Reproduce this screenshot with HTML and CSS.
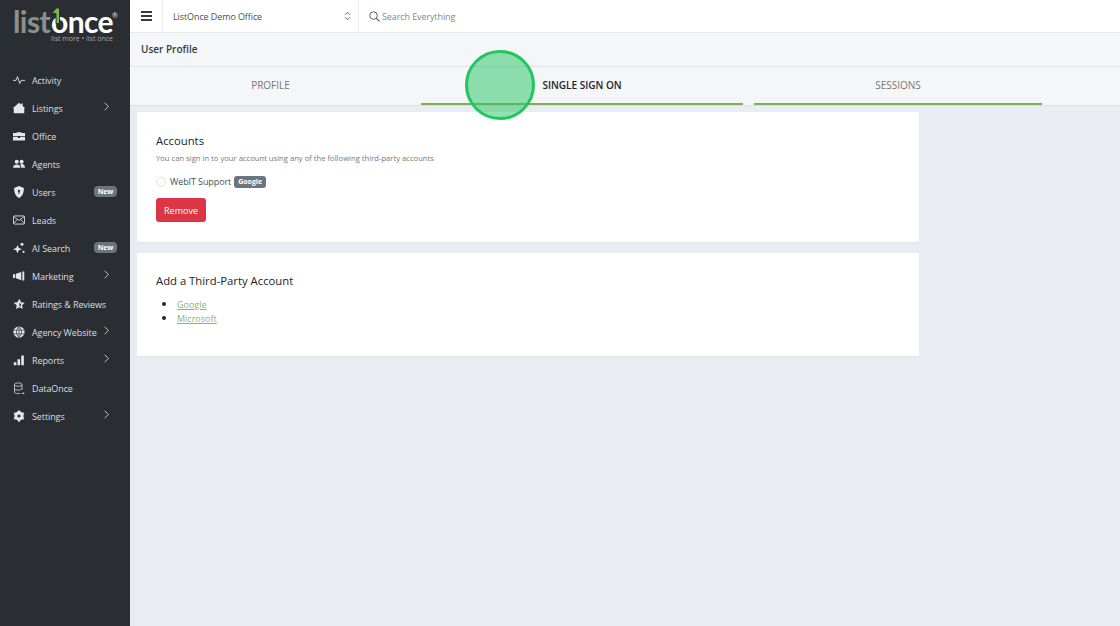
FILE: index.html
```html
<!DOCTYPE html>
<html lang="en">
<head>
    <meta charset="UTF-8">
    <title>User Profile</title>
    <link rel="stylesheet" href="styles.css">
</head>
<body>
    <aside class="sidebar">
        <div class="logo">
            <div class="logo-word"><span class="logo-list">list</span><span class="logo-once">once</span><span class="logo-reg">®</span>
                <svg class="logo-one" viewBox="0 0 10 17" width="10" height="17"><path d="M1 6.500 5 1h3.500v15.500H5V6.500z" fill="#7ab648" stroke="#2a2e32" stroke-width="1"/></svg>
            </div>
            <div class="logo-tag">list more • list once</div>
        </div>
        <nav class="nav">
            <a class="nav-item"><svg class="nav-icon" viewBox="0 0 16 16"><path d="M0 8.500h4l2-5 3 9 2-4h5" fill="none" stroke="#e4e6e8" stroke-width="1.200"/></svg><span>Activity</span></a>
            <a class="nav-item"><svg class="nav-icon" viewBox="0 0 16 16"><path d="M0 8 8 1l3 2.500V2h2v3.500L16 8l-1 1v6H1V9z" fill="#e4e6e8"/></svg><span>Listings</span><svg class="nav-arrow" viewBox="0 0 8 12"><path d="M1.500 1 6.500 6l-5 5" fill="none" stroke="#cfd2d5" stroke-width="1.200"/></svg></a>
            <a class="nav-item"><svg class="nav-icon" viewBox="0 0 16 16"><path d="M5 4V2.500h6V4h5v4H0V4zM6 3.500V4h4v-.5zM0 9h6.500v1.500h3V9H16v5H0z" fill="#e4e6e8"/></svg><span>Office</span></a>
            <a class="nav-item"><svg class="nav-icon" viewBox="0 0 16 16"><circle cx="5" cy="5" r="2.700" fill="#e4e6e8"/><circle cx="11.500" cy="5" r="2.700" fill="#e4e6e8"/><path d="M0 13c0-6 10-6 10 0zM11 13c0-2-.5-3.500-1.500-4.500 3-1.500 6.500 0 6.500 4.500z" fill="#e4e6e8"/></svg><span>Agents</span></a>
            <a class="nav-item"><svg class="nav-icon" viewBox="0 0 16 16"><path d="M8 0l6.500 2.500c0 6-1.500 10.500-6.500 13.500C3 13 1.500 8.500 1.500 2.500z" fill="#e4e6e8"/><circle cx="8" cy="6.500" r="1.500" fill="#2a2e32"/><rect x="7.300" y="7" width="1.400" height="3.500" fill="#2a2e32"/></svg><span>Users</span><span class="nav-badge">New</span></a>
            <a class="nav-item"><svg class="nav-icon" viewBox="0 0 16 16"><rect x=".6" y="2.600" width="14.800" height="10.800" rx="1.500" fill="none" stroke="#e4e6e8" stroke-width="1.200"/><path d="M1 3.500 8 8.500l7-5M1 12.500l5-5.500M15 12.500 10 7" fill="none" stroke="#e4e6e8" stroke-width="1.100"/></svg><span>Leads</span></a>
            <a class="nav-item"><svg class="nav-icon" viewBox="0 0 16 16"><path d="M6 4l1.800 4L12 9.500 7.800 11 6 15 4.200 11 0 9.500 4.200 8z" fill="#e4e6e8"/><circle cx="12" cy="3" r="2" fill="#e4e6e8"/><circle cx="14" cy="13" r="1.500" fill="#e4e6e8"/></svg><span>AI Search</span><span class="nav-badge">New</span></a>
            <a class="nav-item"><svg class="nav-icon" viewBox="0 0 16 16"><path d="M0 5.500h3v5H0zM4 5l7-2.500v11L4 11zM12.500 2H15v12h-2.500z" fill="#e4e6e8"/></svg><span>Marketing</span><svg class="nav-arrow" viewBox="0 0 8 12"><path d="M1.500 1 6.500 6l-5 5" fill="none" stroke="#cfd2d5" stroke-width="1.200"/></svg></a>
            <a class="nav-item"><svg class="nav-icon" viewBox="0 0 16 16"><path d="M8.500 1l2.200 4.500 5 .7-3.600 3.500.9 5-4.500-2.400-4.500 2.400.9-5L.8 6.200l5-.7z" fill="#e4e6e8"/><path d="M8.500 5.500l1 2 2.200.3-1.600 1.600.4 2.200-2-1z" fill="#2a2e32"/></svg><span>Ratings &amp; Reviews</span></a>
            <a class="nav-item"><svg class="nav-icon" viewBox="0 0 16 16"><circle cx="8" cy="8" r="7.500" fill="#e4e6e8"/><path d="M1 5.500h14M1 10.500h14M8 1v14M8 1C3.500 5 3.500 11 8 15M8 1c4.500 4 4.500 10 0 14" fill="none" stroke="#2a2e32" stroke-width=".9"/></svg><span>Agency Website</span><svg class="nav-arrow" viewBox="0 0 8 12"><path d="M1.500 1 6.500 6l-5 5" fill="none" stroke="#cfd2d5" stroke-width="1.200"/></svg></a>
            <a class="nav-item"><svg class="nav-icon" viewBox="0 0 16 16"><path d="M1 11h3.500v4H1zM6 7h3.500v8H6zM11 2h3.500v13H11z" fill="#e4e6e8"/></svg><span>Reports</span><svg class="nav-arrow" viewBox="0 0 8 12"><path d="M1.500 1 6.500 6l-5 5" fill="none" stroke="#cfd2d5" stroke-width="1.200"/></svg></a>
            <a class="nav-item"><svg class="nav-icon" viewBox="0 0 16 16"><ellipse cx="7" cy="3.500" rx="5" ry="2.300" fill="none" stroke="#e4e6e8"/><path d="M2 3.500v10c0 1.500 2.500 2 5 2h3M12 3.500V10M2 8.500c0 1.500 2.500 2.300 5 2.300s5-.8 5-2.300" fill="none" stroke="#e4e6e8"/><path d="M12 15h3" stroke="#e4e6e8" stroke-width="1.500"/></svg><span>DataOnce</span></a>
            <a class="nav-item"><svg class="nav-icon" viewBox="0 0 16 16"><circle cx="8" cy="8" r="4.500" fill="none" stroke="#e4e6e8" stroke-width="3.400"/><path d="M8 8V.500M8 8v7.500M8 8 1.500 4.200M8 8l6.500 3.800M8 8l-6.500 3.800M8 8l6.500-3.800" stroke="#e4e6e8" stroke-width="2.600"/><circle cx="8" cy="8" r="2.100" fill="#2a2e32"/></svg><span>Settings</span><svg class="nav-arrow" viewBox="0 0 8 12"><path d="M1.500 1 6.500 6l-5 5" fill="none" stroke="#cfd2d5" stroke-width="1.200"/></svg></a>
        </nav>
    </aside>

    <div class="main">
        <header class="topbar">
            <button class="menu-button"><span></span><span></span><span></span></button>
            <div class="office-select">
                <span>ListOnce Demo Office</span>
                <svg viewBox="0 0 8 12" width="7" height="10"><path d="M1 4.500 4 1.500l3 3M1 7.500l3 3 3-3" fill="none" stroke="#555" stroke-width="1.100"/></svg>
            </div>
            <div class="search">
                <svg viewBox="0 0 14 14" width="11" height="11"><circle cx="5.800" cy="5.800" r="4.800" fill="none" stroke="#555" stroke-width="1.200"/><path d="M9.300 9.300 13.300 13.300" stroke="#555" stroke-width="1.400"/></svg>
                <span>Search Everything</span>
            </div>
        </header>

        <div class="page-title">User Profile</div>

        <div class="tabs">
            <div class="tab">PROFILE</div>
            <div class="tab tab-current tab-line">SINGLE SIGN ON</div>
            <div class="tab tab-line">SESSIONS</div>
        </div>

        <div class="content">
            <section class="card card-accounts">
                <h2 class="card-title">Accounts</h2>
                <p class="card-text">You can sign in to your account using any of the following third-party accounts</p>
                <div class="account-row">
                    <span class="radio"></span>
                    <span class="account-name">WebIT Support</span>
                    <span class="provider-badge">Google</span>
                </div>
                <button class="remove-button">Remove</button>
            </section>

            <section class="card card-add">
                <h2 class="card-title">Add a Third-Party Account</h2>
                <ul class="provider-list">
                    <li><a href="#">Google</a></li>
                    <li><a href="#">Microsoft</a></li>
                </ul>
            </section>
        </div>
    </div>

    <div class="click-marker"></div>
</body>
</html>
```

FILE: styles.css
```css
* {
    box-sizing: border-box;
}

html, body {
    height: 100%;
}

body {
    margin: 0;
    display: flex;
    height: 626px;
    overflow: hidden;
    font-family: "Open Sans", "Noto Sans", sans-serif;
    background-color: #e9ecf3;
    color: #343a40;
}

/* sidebar */
.sidebar {
    width: 130px;
    flex-shrink: 0;
    background-color: #2a2e32;
    color: #e4e6e8;
}

.logo {
    height: 66px;
    padding: 7px 13px 0;
}

.logo-word {
    position: relative;
    display: flex;
    height: 27px;
    font-family: "Lato", sans-serif;
    font-weight: 700;
    font-size: 30px;
    line-height: 28px;
    letter-spacing: -0.6px;
}

.logo-list {
    color: #8d8f91;
    margin-right: 1px;
}

.logo-once {
    color: #fff;
}

.logo-reg {
    font-size: 7px;
    line-height: 8px;
    font-weight: 400;
    letter-spacing: 0;
    margin-top: 4px;
    margin-left: -1px;
}

.logo-one {
    position: absolute;
    left: 38px;
    top: 0;
}

.logo-tag {
    font-size: 7px;
    line-height: 9px;
    text-align: right;
    color: #a4a6a9;
    width: 100px;
    white-space: nowrap;
}

.nav {
    display: flex;
    flex-direction: column;
}

.nav-item {
    display: flex;
    align-items: center;
    height: 28px;
    padding-left: 13px;
    font-size: 9px;
    letter-spacing: -0.1px;
    white-space: nowrap;
    position: relative;
    color: #dcdee1;
}

.nav-icon {
    width: 12px;
    height: 12px;
    margin-right: 7px;
    flex-shrink: 0;
}

.nav-arrow {
    position: absolute;
    left: 103px;
    top: 8px;
    width: 7px;
    height: 9px;
}

.nav-badge {
    position: absolute;
    left: 94px;
    top: 8px;
    width: 23px;
    height: 11px;
    border-radius: 4px;
    background-color: #6c757d;
    color: #fff;
    font-size: 7px;
    font-weight: 700;
    line-height: 11px;
    text-align: center;
}

/* main column */
.main {
    flex: 1;
    display: flex;
    flex-direction: column;
    min-width: 0;
}

.topbar {
    height: 33px;
    display: flex;
    background-color: #fff;
    border-bottom: 1px solid #e9ecef;
    font-size: 9px;
    letter-spacing: -0.1px;
}

.menu-button {
    width: 33px;
    border: none;
    border-right: 1px solid #edeff2;
    background: none;
    padding: 0 0 1px;
    display: flex;
    flex-direction: column;
    align-items: center;
    justify-content: center;
    gap: 2px;
}

.menu-button span {
    width: 11px;
    height: 2px;
    background-color: #343a40;
}

.office-select {
    width: 196px;
    display: flex;
    align-items: center;
    justify-content: space-between;
    padding: 0 7px 0 10px;
    border-right: 1px solid #edeff2;
    color: #495057;
}

.search {
    display: flex;
    align-items: center;
    gap: 2px;
    padding-left: 10px;
    color: #888;
}

.page-title {
    height: 34px;
    padding: 0 0 2px 11px;
    display: flex;
    align-items: center;
    background-color: #f5f6f8;
    border-bottom: 1px solid #dfe2e8;
    font-size: 10px;
    font-weight: 600;
    color: #343a40;
}

.tabs {
    height: 38px;
    display: grid;
    grid-template-columns: 279px 322px 288px;
    gap: 11px;
    padding-left: 1px;
    background-color: #f5f6f8;
    box-shadow: 0 1px 0 #dcdfe5;
}

.tab {
    display: flex;
    align-items: center;
    justify-content: center;
    font-size: 10px;
    color: #777;
    border-bottom: 2px solid transparent;
}

.tab-line {
    border-bottom-color: #7fb050;
}

.tab-current {
    color: #212529;
    font-weight: 600;
}

.content {
    flex: 1;
    padding: 7px 0 0 7px;
    display: flex;
    flex-direction: column;
    gap: 10px;
}

/* cards */
.card {
    width: 782px;
    background-color: #fff;
    border-bottom: 1px solid #dfe2e8;
    padding: 0 19px;
}

.card-accounts {
    height: 131px;
    padding-top: 20px;
}

.card-add {
    height: 104px;
    padding-top: 19px;
}

.card-title {
    margin: 0;
    font-size: 11.300px;
    line-height: 17px;
    font-weight: 500;
    color: #212529;
}

.card-text {
    margin: 3px 0 0;
    font-size: 7.650px;
    line-height: 12px;
    color: #777;
}

.account-row {
    display: flex;
    align-items: center;
    margin-top: 11px;
    font-size: 9px;
    letter-spacing: -0.1px;
    color: #495057;
}

.radio {
    width: 10px;
    height: 10px;
    border: 1px solid #dee2e6;
    border-radius: 50%;
    margin-right: 4px;
    background-color: #fff;
}

.provider-badge {
    margin-left: 3px;
    height: 12px;
    padding: 0 4px;
    border-radius: 3px;
    background-color: #6c757d;
    color: #fff;
    font-size: 7px;
    font-weight: 700;
    letter-spacing: 0;
    line-height: 12px;
}

.remove-button {
    display: block;
    margin-top: 10px;
    width: 50px;
    height: 24px;
    border: none;
    border-radius: 3px;
    background-color: #dc3545;
    color: #fff;
    font-family: inherit;
    font-size: 9px;
    padding: 0;
}

.provider-list {
    margin: 8px 0 0;
    padding-left: 21px;
    font-size: 9px;
    line-height: 13px;
}

.provider-list li::marker {
    font-size: 11px;
    color: #212529;
}

.provider-list a {
    color: #8db660;
}

/* green click marker over the page */
.click-marker {
    position: absolute;
    left: 465px;
    top: 50px;
    width: 70px;
    height: 70px;
    border-radius: 50%;
    border: 3px solid #22c55e;
    background-color: rgba(34, 197, 94, 0.5);
}
```
